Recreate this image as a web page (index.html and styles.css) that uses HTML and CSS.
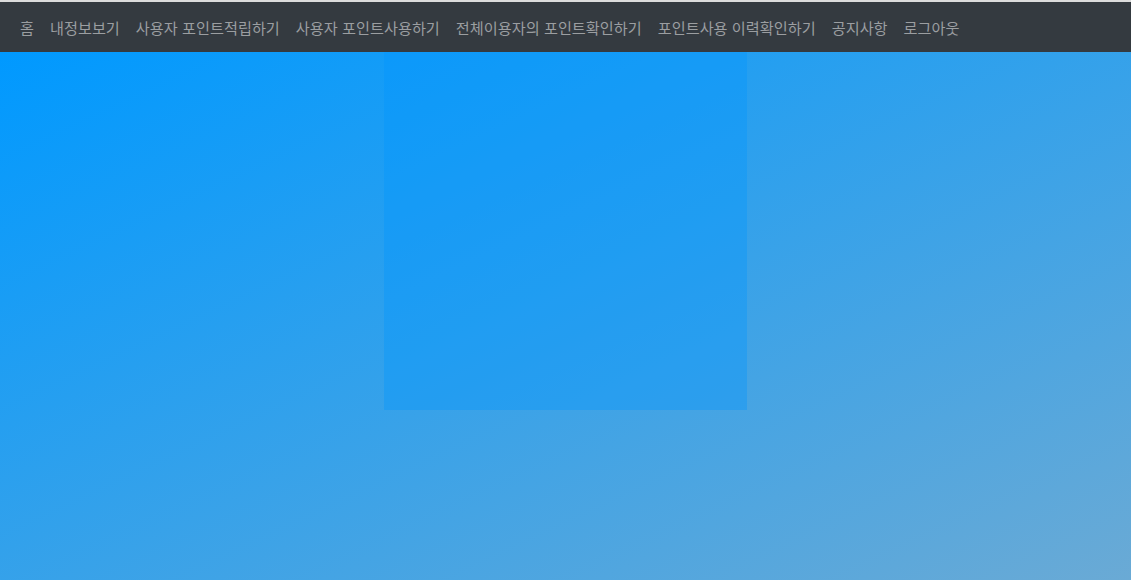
FILE: index.html
```html
<!DOCTYPE html>
<html lang="ko">
<head>
<meta charset="utf-8">
<title>포인트</title>
<link rel="stylesheet" href="styles.css">
</head>
<body>
<div class="topline"></div>
<nav class="navbar">
  <a class="nav-link" href="#">홈</a>
  <a class="nav-link" href="#">내정보보기</a>
  <a class="nav-link" href="#">사용자 포인트적립하기</a>
  <a class="nav-link" href="#">사용자 포인트사용하기</a>
  <a class="nav-link" href="#">전체이용자의 포인트확인하기</a>
  <a class="nav-link" href="#">포인트사용 이력확인하기</a>
  <a class="nav-link" href="#">공지사항</a>
  <a class="nav-link" href="#">로그아웃</a>
</nav>
<main class="stage">
  <div class="panel"></div>
</main>
</body>
</html>
```

FILE: styles.css
```css
html, body {
  margin: 0;
  padding: 0;
  height: 100%;
}
body {
  display: flex;
  flex-direction: column;
  font-family: "Noto Sans CJK KR", "Noto Sans", sans-serif;
}
.topline {
  height: 2px;
  background: #dcdcdc;
  flex: none;
}
.navbar {
  flex: none;
  height: 50px;
  background: #343a40;
  display: flex;
  align-items: center;
  padding: 0 12px;
  box-sizing: border-box;
}
.nav-link {
  color: #9b9ea1;
  text-decoration: none;
  font-size: 15.2px;
  padding: 0 8px;
  line-height: 20px;
  white-space: nowrap;
}
.stage {
  flex: 1;
  background: linear-gradient(to bottom right, #0099ff, #6aaad5);
  display: flex;
  justify-content: center;
  align-items: flex-start;
}
.panel {
  width: 363px;
  height: 358px;
  background: rgba(0, 150, 255, 0.35);
}
```
